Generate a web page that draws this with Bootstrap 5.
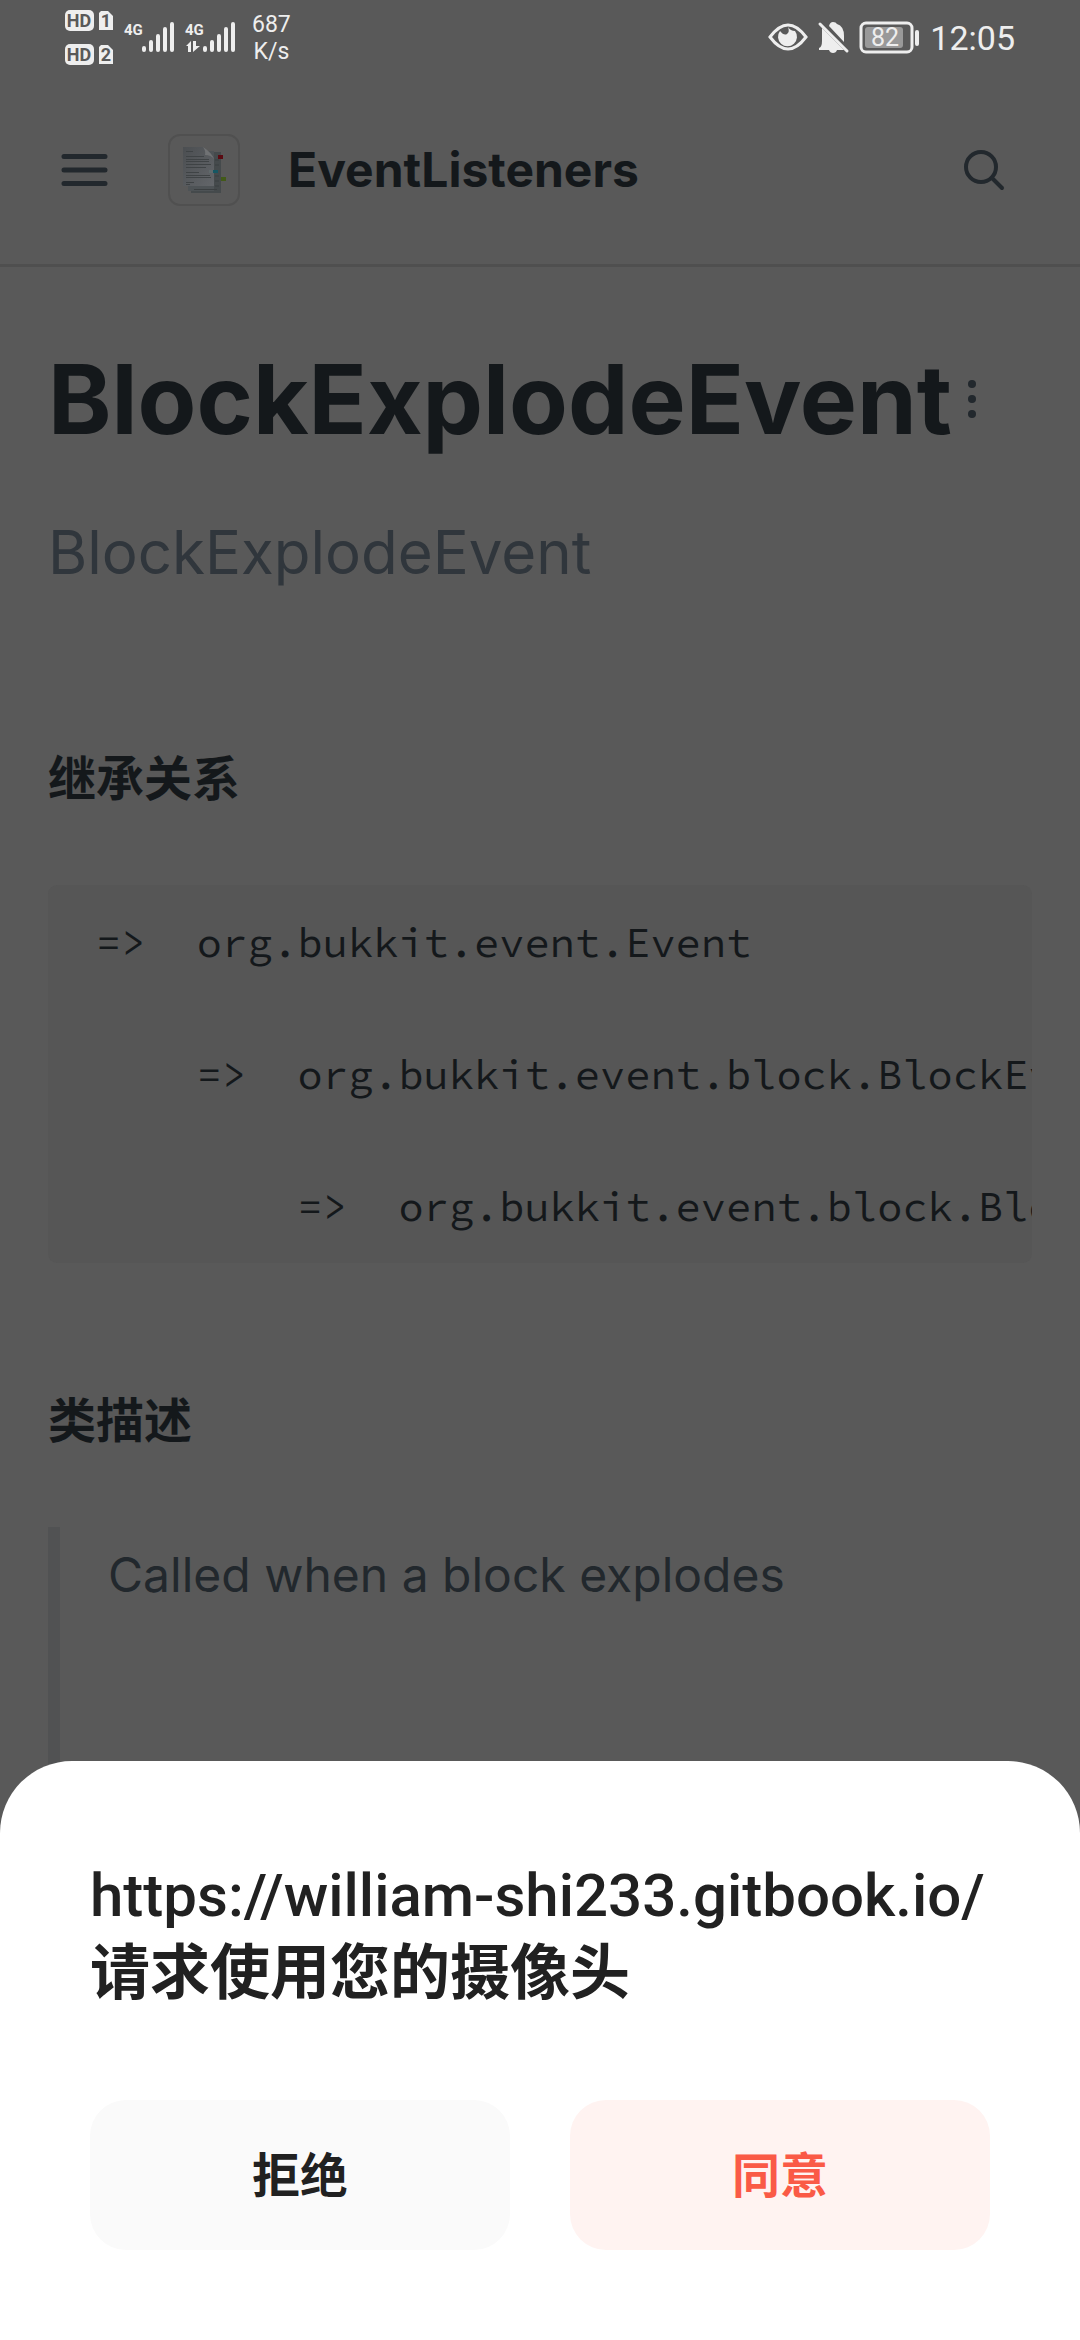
<!DOCTYPE html>
<html lang="zh-CN">
<head>
<meta charset="utf-8">
<meta name="viewport" content="width=device-width, initial-scale=1">
<title>BlockExplodeEvent - EventListeners</title>
<link rel="stylesheet" href="https://cdn.jsdelivr.net/npm/bootstrap@5.3.0/dist/css/bootstrap.min.css">
<style>
  :root { --page: #595959; --ink: #14181b; --ink-soft: #22282d; --line: #4f4f4f; --status: #eeeeee; }
  body { background: var(--page); color: var(--ink); font-family: Inter, "Noto Sans CJK SC", sans-serif; min-height: 100vh; overflow: hidden; }
  svg { display: block; flex: none; }
  .phone-status { height: 76px; padding: 0 65px 0 64px; color: var(--status); font-family: Roboto, sans-serif; }
  .net-speed { font-size: 23px; line-height: 27px; text-align: center; margin-left: 12px; }
  .clock { font-size: 34px; line-height: 52px; margin-left: 8px; }
  .site-header { height: 191px; padding: 0 60px 0 48px; border-bottom: 3px solid var(--line); }
  .icon-btn { padding: 0; border: 0; background: none; color: var(--ink-soft); }
  .site-logo { width: 72px; height: 72px; border: 2px solid #505050; border-radius: 12px; }
  .site-name { font-size: 48px; line-height: 60px; font-weight: 700; color: var(--ink); text-decoration: none; }
  .doc { padding: 72px 48px 0; }
  .doc h1 { font-size: 96px; line-height: 120px; font-weight: 700; margin: 0; }
  .doc .summary { font-size: 60px; line-height: 90px; color: #30363c; margin: 48px 0 146px; }
  .doc h2 { font-size: 48px; line-height: 72px; font-weight: 700; margin: 0 0 70px; }
  .code-box { background: #565656; border-radius: 9px; padding: 24px 48px; margin: 0 0 122px; overflow: hidden; font: 42px/66px "Source Code Pro", "DejaVu Sans Mono", monospace; color: var(--ink); }
  .doc blockquote { border-left: 12px solid #515253; padding: 12px 48px 0; margin: 0; font-size: 48px; line-height: 72px; min-height: 300px; color: var(--ink-soft); }
  .sheet { background: #fff; border-radius: 72px 72px 0 0; padding: 96px 90px 90px; color: #212121; font-family: Roboto, "Noto Sans CJK SC", sans-serif; }
  .sheet h3 { font-size: 60px; line-height: 78px; font-weight: 500; margin: 0 0 87px; }
  .sheet h3 .ask-what { font-weight: 700; }
  .sheet-actions { gap: 60px; }
  .sheet-btn { height: 150px; border: 0; border-radius: 36px; padding: 4px 0 0; font-size: 48px; font-weight: 700; }
  .deny { background: #fafafa; color: #212121; }
  .allow { background: #fff3f1; color: #fa5a46; }
</style>
</head>
<body>
<div class="phone-status d-flex justify-content-between align-items-center">
  <div class="d-flex align-items-center">
    <svg width="176" height="60" viewBox="64 8 176 60" fill="#eee" font-family="Roboto, sans-serif" role="img" aria-label="HD 1, HD 2, 4G, 4G">
      <rect x="65" y="10" width="29" height="21" rx="5"/><path d="M101 11h7l5 5v14h-14V13z"/>
      <rect x="65" y="44" width="29" height="21" rx="5"/><path d="M101 45h7l5 5v14h-14V47z"/>
      <g fill="#595959" font-weight="700" font-size="18" text-anchor="middle"><text x="79" y="27">HD</text><text x="106" y="27">1</text><text x="79" y="61">HD</text><text x="106" y="61">2</text></g>
      <g font-weight="700" font-size="15"><text x="124" y="35">4G</text><text x="185" y="35">4G</text></g>
      <path d="M144 48v2M151 42v8M158 36v14M165 29v21M172 24v26M205 48v2M212 42v8M219 36v14M226 29v21M233 24v26" stroke="#eee" stroke-width="4" stroke-linecap="round"/>
      <path d="M186 46l5-5v11h-3v-6zM193 41h3v5h4l-7 6z"/>
    </svg>
    <div class="net-speed">687<br>K/s</div>
  </div>
  <div class="d-flex align-items-center">
    <svg width="156" height="60" viewBox="765 8 156 60" fill="none" stroke="#eee" font-family="Roboto, sans-serif" role="img" aria-label="82%">
      <path d="M769 37q18-24 36 0q-18 24-36 0z" stroke-width="3"/>
      <path d="M779 31a9.500 9.500 0 1 0 15 0a9 9 0 0 1-7-4q2 5-1 7t-7-3z" fill="#eee" stroke="none"/>
      <path d="M821 28l22 22h-25v-2q3-1 3-7zM828 26q1-4 4-4t4 2q7 2 7 12v6z" fill="#eee" stroke="none"/>
      <path d="M828 50h8q-1 3-4 3t-4-3z" fill="#eee" stroke="none"/>
      <path d="M819 24l27 27" stroke-width="3" stroke-linecap="round"/>
      <rect x="860" y="23" width="51" height="29" rx="5" stroke-width="3"/>
      <rect x="864" y="27" width="38" height="21" rx="3" fill="#999" stroke="none"/>
      <path d="M916 32v12" stroke-width="4" stroke-linecap="round"/>
      <text x="884" y="46" fill="#eee" stroke="none" font-size="25" text-anchor="middle">82</text>
    </svg>
    <span class="clock">12:05</span>
  </div>
</div>

<header class="site-header d-flex align-items-center">
  <button class="icon-btn" type="button" aria-label="Menu">
    <svg width="72" height="72" viewBox="0 0 72 72" stroke="currentColor" stroke-width="5" stroke-linecap="round"><path d="M16 22.500h41M16 36h41M16 49.500h41"/></svg>
  </button>
  <a class="site-logo d-flex align-items-center justify-content-center ms-5" href="#" aria-label="Home">
    <svg width="48" height="48" viewBox="0 0 48 48">
      <defs><linearGradient id="sheetFill" x1="0" y1="0" x2="1" y2="1"><stop offset="0" stop-color="#4b4e51"/><stop offset="1" stop-color="#63666a"/></linearGradient></defs>
      <path d="M11 6h30v41H11z" fill="#454a4c"/>
      <path d="M8 5h26v40H8z" fill="#4e5356"/>
      <path d="M14 43.500h23M35 14h4M35 19h4M35 30h4M35 35h4M35 40h4" stroke="#3b3f41"/>
      <path d="M3 1h20l11 11v28H3z" fill="url(#sheetFill)"/>
      <path d="M23 1q3 4 2 8q6 0 9 4q-2-6-11-12z" fill="#707274"/>
      <path d="M6 5.500h7M6 10.500h18M6 13.500h23M6 15.500h23M6 18.500h25M6 21.500h20M6 26.500h13M6 29.500h24M6 31.500h25M6 36.500h8M6 38.500h4" stroke="#3f4345"/>
      <path d="M38 9h5v4h-5z" fill="#5a0b12"/><path d="M29 24h4v3h-4z" fill="#606a6c"/><path d="M33 24h5v3h-5z" fill="#165763"/><path d="M41 31h5v4h-5z" fill="#425a18"/>
    </svg>
  </a>
  <a class="site-name ms-5" href="#">EventListeners</a>
  <button class="icon-btn ms-auto" type="button" aria-label="Search">
    <svg width="72" height="72" viewBox="0 0 72 72" fill="none" stroke="currentColor" stroke-width="4" stroke-linecap="round"><circle cx="33" cy="33" r="15"/><path d="M44 44l10 10"/></svg>
  </button>
</header>

<main class="doc">
  <div class="d-flex align-items-center">
    <h1>BlockExplodeEvent</h1>
    <button class="icon-btn" type="button" aria-label="More">
      <svg width="40" height="48" viewBox="0 0 40 48" fill="currentColor"><circle cx="20" cy="9" r="4"/><circle cx="20" cy="24" r="4"/><circle cx="20" cy="39" r="4"/></svg>
    </button>
  </div>
  <p class="summary">BlockExplodeEvent</p>
  <h2>继承关系</h2>
<pre class="code-box">=&gt;  org.bukkit.event.Event

    =&gt;  org.bukkit.event.block.BlockEvent

        =&gt;  org.bukkit.event.block.BlockExplodeEvent</pre>
  <h2>类描述</h2>
  <blockquote>Called when a block explodes</blockquote>
</main>

<section class="sheet fixed-bottom" role="dialog" aria-labelledby="ask">
  <h3 id="ask">https://william-shi233.gitbook.io/<br><span class="ask-what">请求使用您的摄像头</span></h3>
  <div class="sheet-actions d-flex">
    <button class="sheet-btn deny flex-fill" type="button">拒绝</button>
    <button class="sheet-btn allow flex-fill" type="button">同意</button>
  </div>
</section>
<script src="https://cdn.jsdelivr.net/npm/bootstrap@5.3.0/dist/js/bootstrap.bundle.min.js"></script>
</body>
</html>
